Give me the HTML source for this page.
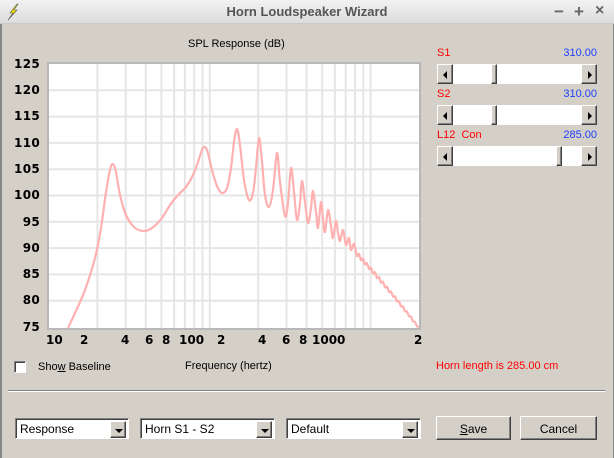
<!DOCTYPE html><html><head><style>
*{margin:0;padding:0;box-sizing:border-box}
body{width:614px;height:458px;background:#d4d0c8;font-family:"Liberation Sans",sans-serif;font-size:11px;position:relative;overflow:hidden}
.a{position:absolute;white-space:nowrap}
.tb{position:absolute;left:0;top:0;width:614px;height:24px;background:linear-gradient(#f2f2f2,#dcdcdc);border-bottom:1px solid #c8c8c8}
.title{position:absolute;left:0;width:614px;top:4px;text-align:center;font-weight:bold;font-size:13px;color:#555}
.bev{border:1px solid;border-color:#fff #404040 #404040 #fff;background:#d4d0c8;box-shadow:inset -1px -1px #808080}
.sl{position:absolute;left:437px;width:160px;height:20px;background:#fff}
.sb{position:absolute;top:0;width:16px;height:20px}
.tri{position:absolute;top:6px;left:5px;width:0;height:0;border-top:4px solid transparent;border-bottom:4px solid transparent}
.combo{position:absolute;top:418px;height:21px;background:#fff;border:1px solid;border-color:#808080 #fff #fff #808080;box-shadow:inset 1px 1px #404040;font-size:12px;padding:3px 0 0 4px}
.cb{position:absolute;right:2px;top:2px;width:16px;height:17px}
.dn{position:absolute;left:4px;top:7px;border-left:4px solid transparent;border-right:4px solid transparent;border-top:4px solid #000}
.btn{position:absolute;top:416px;height:24px;font-size:12px;text-align:center;padding-top:5px;border:1px solid;border-color:#fff #404040 #404040 #fff;box-shadow:inset -1px -1px #808080}
.yl{position:absolute;left:10px;width:30px;text-align:right;font-weight:bold;font-size:12px;font-family:"DejaVu Sans","Liberation Sans",sans-serif;letter-spacing:0.3px}
.xl{position:absolute;top:333px;font-weight:bold;font-size:12px;font-family:"DejaVu Sans","Liberation Sans",sans-serif}
</style></head><body>
<div class="tb"><div class="title">Horn Loudspeaker Wizard</div>
<svg class="a" style="left:6px;top:3px" width="14" height="18"><path d="M11 1 L4 10 L7 10 L2 17 L11 7 L8 7 L12 1Z" fill="#f0e000" stroke="#555" stroke-width="0.6"/></svg>
<div class="a" style="left:554px;top:2px;font-size:17px;color:#666;font-weight:bold">−</div>
<div class="a" style="left:574px;top:2px;font-size:17px;color:#666;font-weight:bold">+</div>
<div class="a" style="left:595px;top:2px;font-size:16px;color:#666;font-weight:bold">×</div>
</div>
<div class="a" style="left:0;top:24px;width:2px;height:434px;background:#888"></div>
<div class="a" style="right:0;top:24px;width:1px;height:434px;background:#888"></div>
<div class="a" style="left:188px;top:38px;font-size:11px">SPL Response (dB)</div>
<div class="yl" style="top:57px">125</div><div class="yl" style="top:83px">120</div><div class="yl" style="top:109px">115</div><div class="yl" style="top:136px">110</div><div class="yl" style="top:162px">105</div><div class="yl" style="top:188px">100</div><div class="yl" style="top:215px">95</div><div class="yl" style="top:241px">90</div><div class="yl" style="top:267px">85</div><div class="yl" style="top:293px">80</div><div class="yl" style="top:320px">75</div>
<svg class="a" style="left:0;top:0" width="614" height="340" id="plot">
<rect x="48" y="63" width="372" height="266" fill="#fff" stroke="#b8b8b8" stroke-width="2"/>
<g id="grid" stroke="#e6e6e6" stroke-width="2"></g>
<path id="curve" fill="none" stroke="#ffb0b0" stroke-width="2.2" stroke-linejoin="round" d=""/>
</svg>
<div class="xl" style="left:46px">10</div><div class="xl" style="left:80px">2</div><div class="xl" style="left:121px">4</div><div class="xl" style="left:145px">6</div><div class="xl" style="left:162px">8</div><div class="xl" style="left:179px">100</div><div class="xl" style="left:217px">2</div><div class="xl" style="left:258px">4</div><div class="xl" style="left:282px">6</div><div class="xl" style="left:299px">8</div><div class="xl" style="left:312px">1000</div><div class="xl" style="left:414px">2</div>
<div class="a" style="left:14px;top:361px;width:12px;height:12px;background:#fff;border:1px solid;border-color:#808080 #fff #fff #808080;box-shadow:inset 1px 1px #404040"></div>
<div class="a" style="left:38px;top:361px">Sho<u>w</u> Baseline</div>
<div class="a" style="left:185px;top:360px">Frequency (hertz)</div>
<div class="a" style="left:436px;top:360px;color:#f00">Horn length is 285.00 cm</div>
<div class="a" style="left:437px;top:47px;color:#f00">S1</div><div class="a" style="left:560px;top:47px;color:#2040ff;width:37px;text-align:right">310.00</div>
<div class="a" style="left:437px;top:88px;color:#f00">S2</div><div class="a" style="left:560px;top:88px;color:#2040ff;width:37px;text-align:right">310.00</div>
<div class="a" style="left:437px;top:129px;color:#f00">L12&nbsp; Con</div><div class="a" style="left:560px;top:129px;color:#2040ff;width:37px;text-align:right">285.00</div>
<div class="sl" style="top:64px"><div class="sb bev" style="left:0"><div class="tri" style="border-right:4px solid #000"></div></div><div class="sb bev" style="left:54px;width:6px"></div><div class="sb bev" style="left:144px"><div class="tri" style="left:6px;border-left:4px solid #000"></div></div></div>
<div class="sl" style="top:105px"><div class="sb bev" style="left:0"><div class="tri" style="border-right:4px solid #000"></div></div><div class="sb bev" style="left:54px;width:6px"></div><div class="sb bev" style="left:144px"><div class="tri" style="left:6px;border-left:4px solid #000"></div></div></div>
<div class="sl" style="top:146px"><div class="sb bev" style="left:0"><div class="tri" style="border-right:4px solid #000"></div></div><div class="sb bev" style="left:119px;width:6px"></div><div class="sb bev" style="left:144px"><div class="tri" style="left:6px;border-left:4px solid #000"></div></div></div>
<div class="a" style="left:8px;top:390px;width:597px;height:2px;border-top:1px solid #808080;border-bottom:1px solid #fff"></div>
<div class="combo" style="left:15px;width:114px">Response<div class="cb bev"><div class="dn"></div></div></div>
<div class="combo" style="left:140px;width:135px">Horn S1 - S2<div class="cb bev"><div class="dn"></div></div></div>
<div class="combo" style="left:286px;width:135px">Default<div class="cb bev"><div class="dn"></div></div></div>
<div class="btn" style="left:436px;width:75px"><u>S</u>ave</div>
<div class="btn" style="left:520px;width:77px">Cancel</div>
<script>
var g=document.getElementById('grid'),s='';
function X(f){return 49+160.8*Math.log10(f/10);}
[20,30,40,50,60,70,80,90,100,200,300,400,500,600,700,800,900,1000].forEach(function(f){var x=X(f);s+='<line x1="'+x+'" y1="64" x2="'+x+'" y2="328"/>';});
for(var i=1;i<10;i++){var y=64+i*26.3;s+='<line x1="49" y1="'+y+'" x2="419" y2="'+y+'"/>';}
g.innerHTML=s;
var p=[[68,328],[75,313],[85,290],[95,258],[101,228],[106,192],[110,170],[113,164],[116,172],[120,195],[126,215],[134,227],[143,231],[152,228],[162,218],[170,205],[178,195],[186,187],[193,175],[198,162],[202,150],[205,147],[208,153],[212,170],[217,186],[222,193],[227,188],[231,168],[234,142],[237,129],[240,145],[244,180],[249,200],[253,193],[256,168],[259,138],[262,162],[265,195],[269,207],[273,190],[277,153],[280,182],[285,216],[288,203],[291,168],[294,192],[297,220],[300,203],[302,181],[305,202],[308,223],[311,208],[313,191],[316,212],[318,228],[321,202],[323,219],[325,232],[328,210],[331,226],[333,238],[336,221],[338,233],[340,241],[343,230],[346,245],[349,238],[351,250],[354,244],[357,256]];
for(var k=0,x=359;x<=419;x+=2,k++){var t=(x-359)/60;var y=256+t*66+t*t*6+((k%2)?2:-2)*(1-t*0.6);p.push([x,Math.min(y,328)]);}
// Catmull-Rom smoothing
var d='M'+p[0][0]+','+p[0][1];
for(var i=0;i<p.length-1;i++){var p0=p[Math.max(i-1,0)],p1=p[i],p2=p[i+1],p3=p[Math.min(i+2,p.length-1)];
d+=' C'+(p1[0]+(p2[0]-p0[0])/6)+','+(p1[1]+(p2[1]-p0[1])/6)+' '+(p2[0]-(p3[0]-p1[0])/6)+','+(p2[1]-(p3[1]-p1[1])/6)+' '+p2[0]+','+p2[1];}
document.getElementById('curve').setAttribute('d',d);
</script>
</body></html>
